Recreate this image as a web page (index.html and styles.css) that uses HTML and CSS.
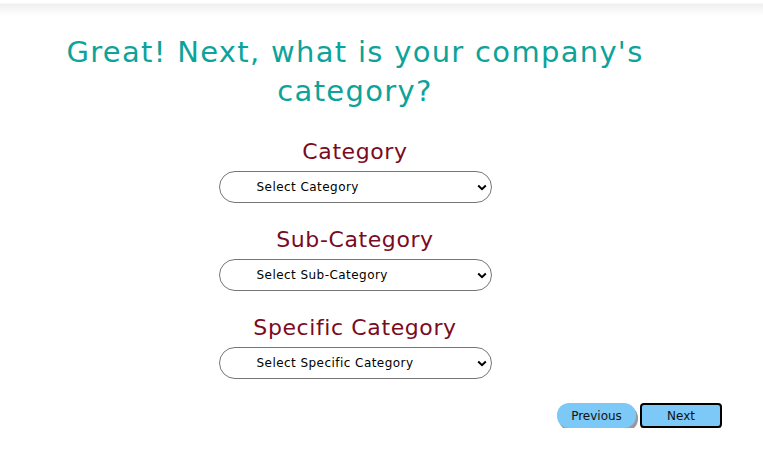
FILE: index.html
```html
<!DOCTYPE html>
<html>
<head>
<meta charset="utf-8">
<link rel="stylesheet" href="styles.css">
</head>
<body>
<div class="topbar"></div>
<main class="wrap">
  <h1 class="title">Great! Next, what is your company's category?</h1>
  <div class="field">
    <label class="label">Category</label>
    <div class="select"><span>Select Category</span><svg width="10" height="7" viewBox="0 0 10 7"><path d="M1.2 1.5 L5 5.2 L8.8 1.5" fill="none" stroke="#000" stroke-width="2"/></svg></div>
  </div>
  <div class="field">
    <label class="label">Sub-Category</label>
    <div class="select"><span>Select Sub-Category</span><svg width="10" height="7" viewBox="0 0 10 7"><path d="M1.2 1.5 L5 5.2 L8.8 1.5" fill="none" stroke="#000" stroke-width="2"/></svg></div>
  </div>
  <div class="field">
    <label class="label">Specific Category</label>
    <div class="select"><span>Select Specific Category</span><svg width="10" height="7" viewBox="0 0 10 7"><path d="M1.2 1.5 L5 5.2 L8.8 1.5" fill="none" stroke="#000" stroke-width="2"/></svg></div>
  </div>
  <div class="actions">
    <button class="btn prev">Previous</button>
    <button class="btn next">Next</button>
  </div>
</main>
</body>
</html>
```
FILE: styles.css
```css
* { box-sizing: border-box; }
body {
  margin: 0;
  background: #fff;
  font-family: "DejaVu Sans", "Open Sans", sans-serif;
}
.topbar {
  height: 16px;
  background: linear-gradient(#fff 0, #fff 3px, #efefef 4px, #f6f6f6 9px, #fff 16px);
}
.wrap {
  width: 710px;
  display: flex;
  flex-direction: column;
  align-items: center;
}
.title {
  margin: 17px 0 4px;
  width: 640px;
  text-align: center;
  color: #0ca39a;
  font-weight: normal;
  font-size: 29px;
  line-height: 39px;
  letter-spacing: 1.3px;
}
.field {
  display: flex;
  flex-direction: column;
  align-items: center;
}
.label {
  color: #7a0b1f;
  font-size: 22px;
  line-height: 30px;
  letter-spacing: 0.6px;
  margin-top: 22px;
  margin-bottom: 4px;
}
.select {
  width: 273px;
  height: 32px;
  border: 1px solid #767676;
  border-radius: 16px;
  display: flex;
  align-items: center;
  justify-content: space-between;
  padding: 0 4px 0 37px;
  font-size: 12px;
  letter-spacing: 0.45px;
  color: #000;
}
.actions {
  align-self: flex-end;
  display: flex;
  gap: 4px;
  margin-top: 24px;
  margin-right: -12px;
}
.btn {
  font-family: inherit;
  font-size: 12px;
  color: #111;
  background: #7cc8f6;
  height: 25px;
  padding: 0;
}
.prev {
  width: 79px;
  border: none;
  border-radius: 12px;
  box-shadow: 2px 3px 0 #9a9a9a;
}
.next {
  width: 82px;
  border: 2px solid #000;
  border-radius: 4px;
  box-shadow: 0 4px 0 -1px #9a9a9a;
}
```
